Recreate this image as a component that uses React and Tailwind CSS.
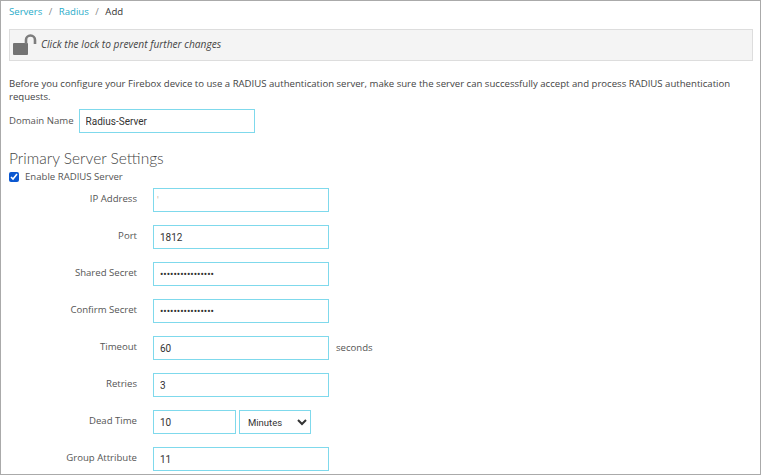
import React from 'react';

const inputClass = "h-[24px] border border-[#7fd9ec] bg-white px-[6px] font-['Roboto',sans-serif] text-[10px] text-[#333] outline-none";

const Row = ({ label, children }) => (
    <div className="flex h-[37px] items-start">
        <label className="w-[128px] pt-[4px] text-right text-[9.6px] leading-[14px] text-[#555]">{label}</label>
        <div className="ml-[16px] flex items-center">{children}</div>
    </div>
);

const LockIcon = () => (
    <svg width="26" height="22" viewBox="0 0 26 22" className="shrink-0">
        <rect x="1" y="9" width="15" height="12" rx="1" fill="#737373" />
        <path d="M14 10V6a4.5 4.5 0 0 1 9 0V10" fill="none" stroke="#7d7d7d" strokeWidth="2.6" />
    </svg>
);

const App = () => {
    return (
        <div className="h-[475px] w-[761px] overflow-hidden border border-[#aaaaaa] bg-white pl-[8px] pr-[7px] font-['Open_Sans',sans-serif]">
            <div className="flex h-[28px] items-start gap-[6.5px] pt-[4px] text-[9.6px] leading-[14px] text-[#888]">
                <span className="text-[#29abc9]">Servers</span>
                <span>/</span>
                <span className="text-[#29abc9]">Radius</span>
                <span>/</span>
                <span className="text-[#333]">Add</span>
            </div>

            <div className="flex h-[32px] items-center gap-[3px] border border-[#dddddd] bg-[#f4f4f4] pl-[2px]">
                <LockIcon />
                <span className="text-[10.2px] italic text-[#444]">Click the lock to prevent further changes</span>
            </div>

            <p className="mt-[16px] text-[9.6px] leading-[13px] text-[#444]">
                Before you configure your Firebox device to use a RADIUS authentication server, make sure the server can successfully accept and process RADIUS authentication requests.
            </p>

            <div className="mt-[6px] flex items-center">
                <label className="text-[9.6px] text-[#555]">Domain Name</label>
                <input className={`${inputClass} ml-[5px] w-[176px]`} defaultValue="Radius-Server" />
            </div>

            <h2 className="mt-[15px] font-['Lato',sans-serif] text-[15.5px] leading-[20px] font-light text-[#444]">Primary Server Settings</h2>

            <div className="flex h-[18px] items-center gap-[6px]">
                <input type="checkbox" defaultChecked className="h-[10px] w-[10px] accent-[#0b57d0]" />
                <span className="text-[9.6px] text-[#555]">Enable RADIUS Server</span>
            </div>

            <div className="mt-[2px]">
                <Row label="IP Address">
                    <input className={`${inputClass} w-[176px] !px-[3px] !text-[#c9b8a4]`} defaultValue="'" />
                </Row>
                <Row label="Port">
                    <input className={`${inputClass} w-[176px]`} defaultValue="1812" />
                </Row>
                <Row label="Shared Secret">
                    <input type="password" className={`${inputClass} w-[176px]`} defaultValue="aaaaaaaaaaaaaaaa" />
                </Row>
                <Row label="Confirm Secret">
                    <input type="password" className={`${inputClass} w-[176px]`} defaultValue="aaaaaaaaaaaaaaaa" />
                </Row>
                <Row label="Timeout">
                    <input className={`${inputClass} w-[176px]`} defaultValue="60" />
                    <span className="ml-[7px] text-[9.6px] text-[#555]">seconds</span>
                </Row>
                <Row label="Retries">
                    <input className={`${inputClass} w-[176px]`} defaultValue="3" />
                </Row>
                <Row label="Dead Time">
                    <input className={`${inputClass} w-[83px]`} defaultValue="10" />
                    <select className={`${inputClass} ml-[3px] w-[72px] !pl-[4px] !pr-[3px] !text-[9.5px]`} defaultValue="Minutes">
                        <option>Minutes</option>
                        <option>Seconds</option>
                    </select>
                </Row>
                <Row label="Group Attribute">
                    <input className={`${inputClass} w-[176px]`} defaultValue="11" />
                </Row>
            </div>
        </div>
    );
};

export default App;
